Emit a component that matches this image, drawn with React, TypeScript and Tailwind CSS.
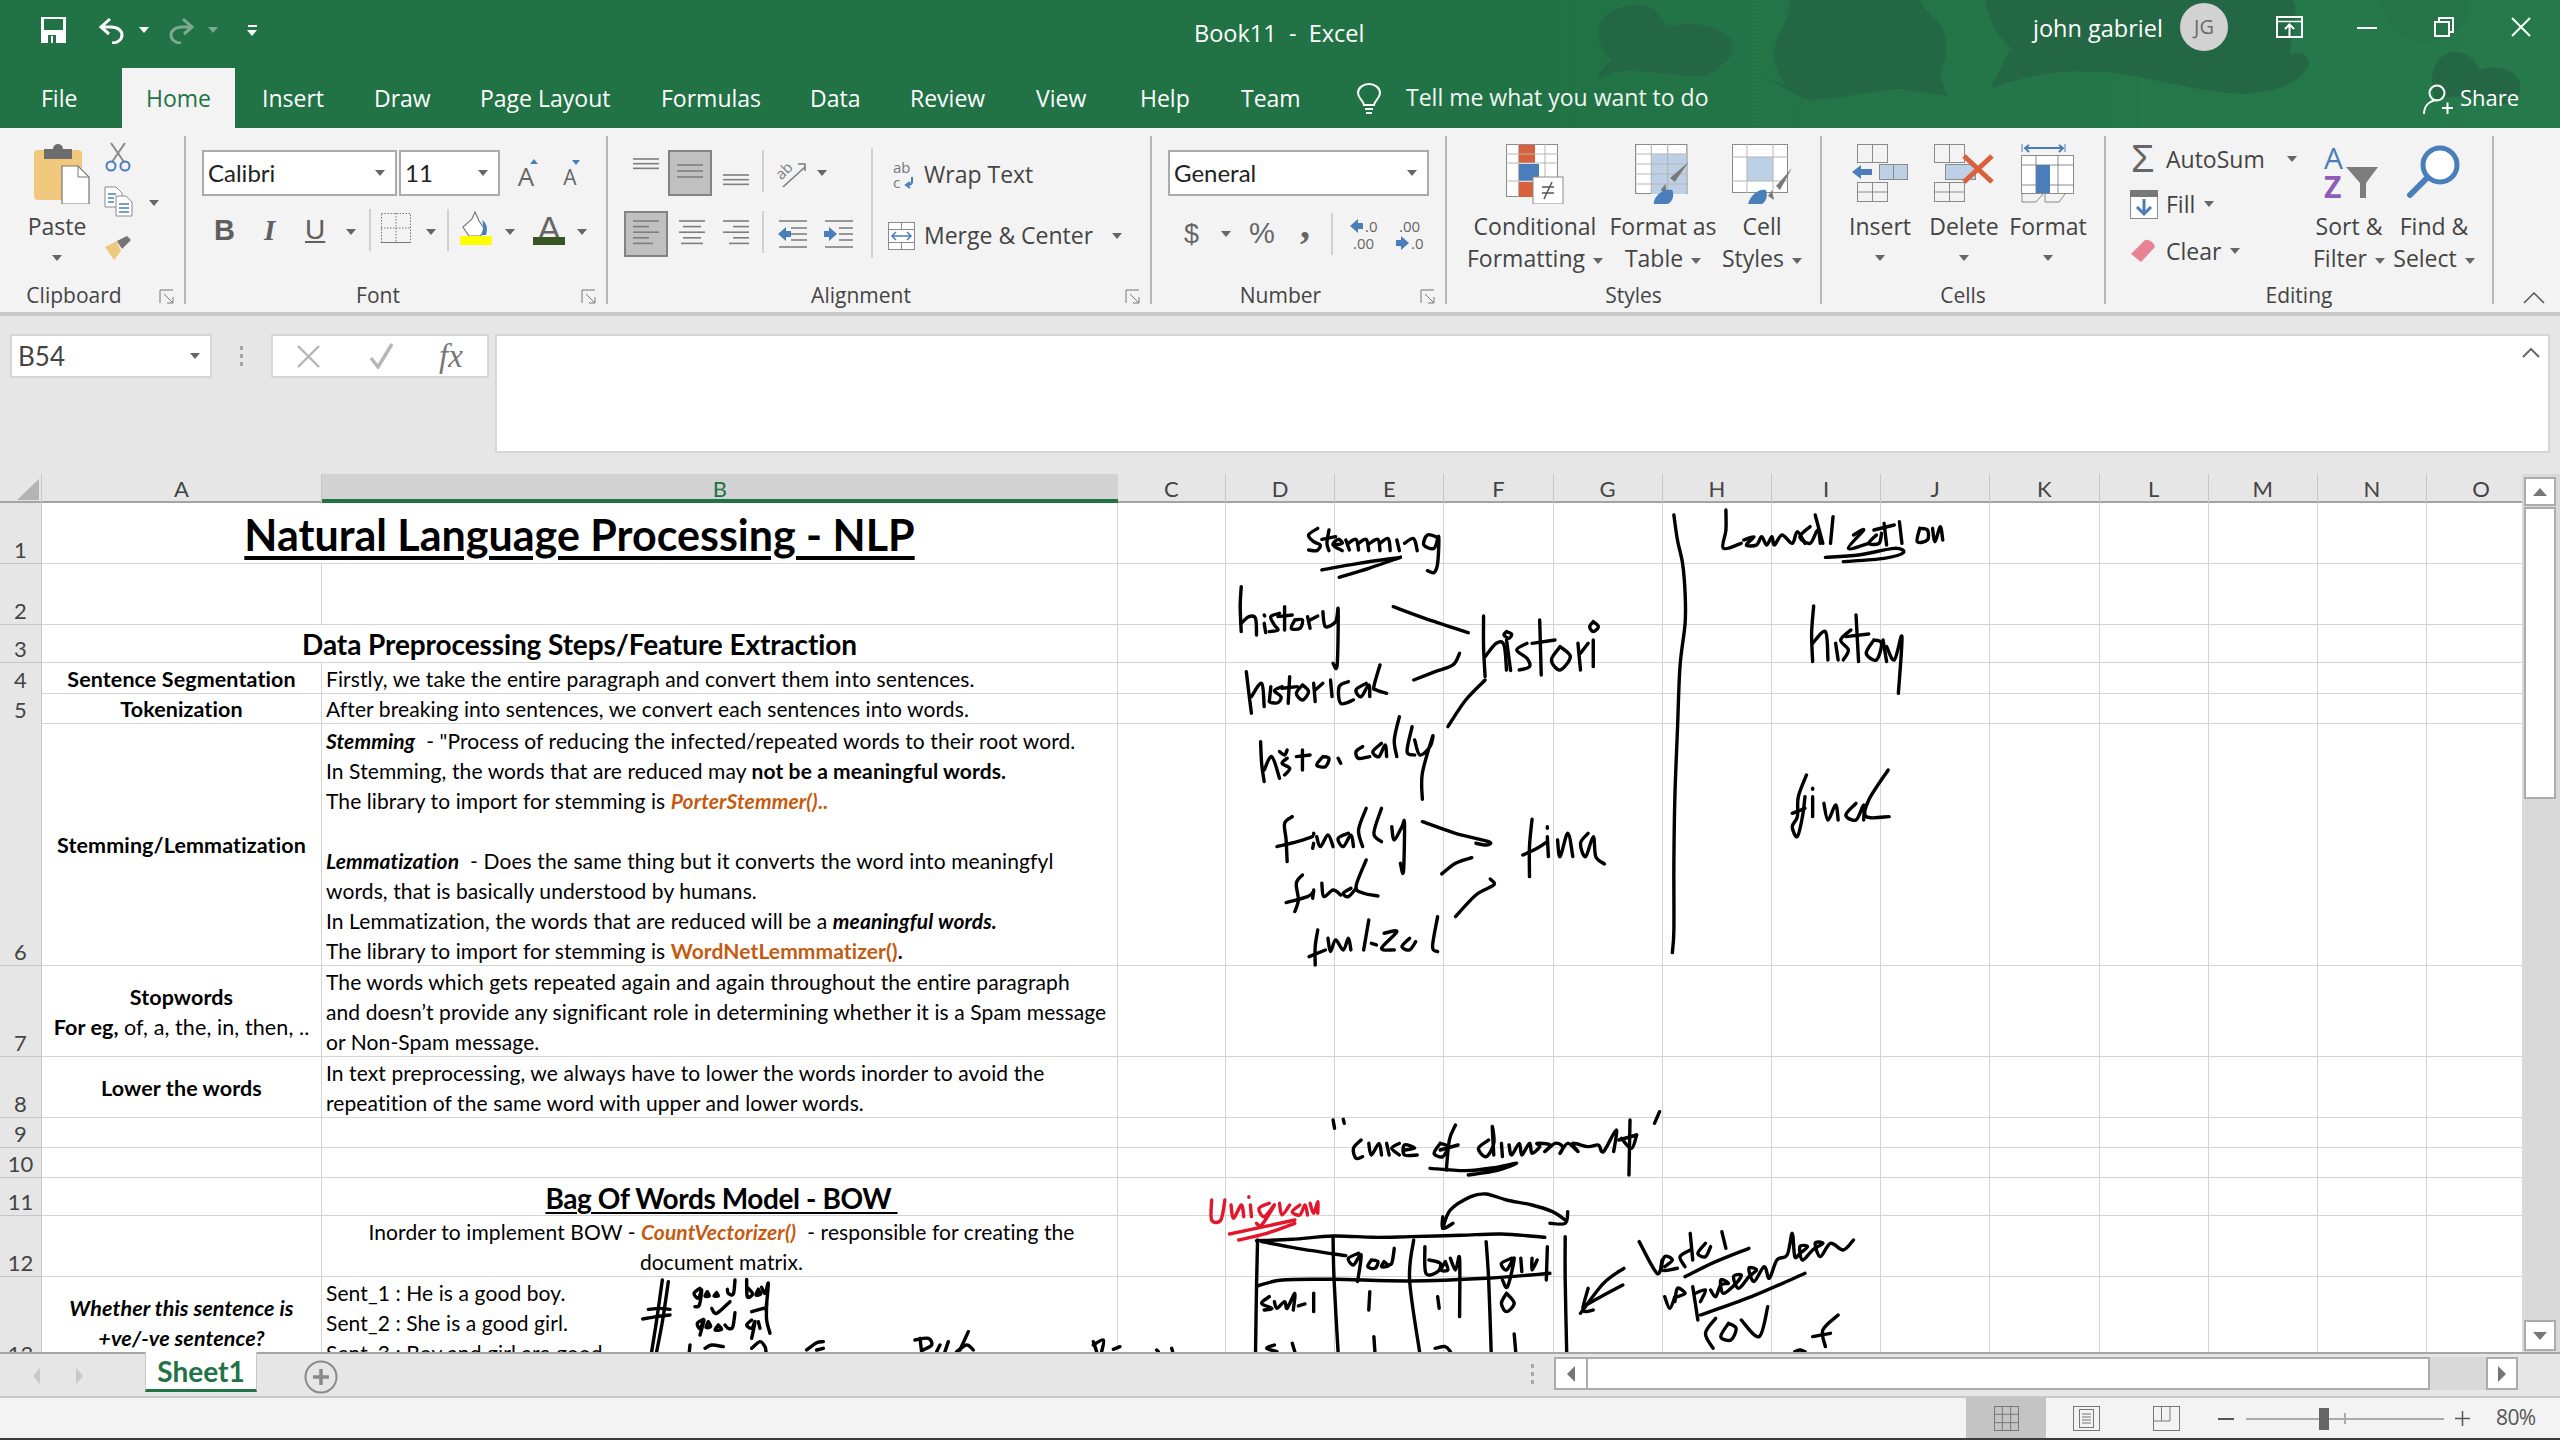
import React from "react";

const ink = (s: string) => {
  const n = s.trim().split(/\s+/).map(Number);
  const p: [number, number][] = [];
  for (let i = 0; i + 1 < n.length; i += 2) p.push([n[i], n[i + 1]]);
  if (p.length === 2) return `M${p[0][0]} ${p[0][1]}L${p[1][0]} ${p[1][1]}`;
  let d = `M${p[0][0]} ${p[0][1]}`;
  for (let i = 0; i < p.length - 1; i++) {
    const a = p[Math.max(0, i - 1)];
    const b = p[i];
    const c = p[i + 1];
    const e = p[Math.min(p.length - 1, i + 2)];
    const c1x = b[0] + (c[0] - a[0]) / 6;
    const c1y = b[1] + (c[1] - a[1]) / 6;
    const c2x = c[0] - (e[0] - b[0]) / 6;
    const c2y = c[1] - (e[1] - b[1]) / 6;
    d += `C${c1x} ${c1y} ${c2x} ${c2y} ${c[0]} ${c[1]}`;
  }
  return d;
};

const Strokes = ({ list, w = 3.4, color = "#000" }: { list: string[]; w?: number; color?: string }) => (
  <>
    {list.map((s, i) => (
      <path key={i} d={ink(s)} fill="none" stroke={color} strokeWidth={w} strokeLinecap="round" strokeLinejoin="round" vectorEffect="non-scaling-stroke" />
    ))}
  </>
);

const upper = [
  "270 145 252 165 262 185 275 195 268 212 252 210", "292 150 288 190 292 212", "278 178 305 170",
  "302 195 318 190 310 178 300 195 318 212", "325 180 332 210", "330 190 345 178 350 210", "350 190 365 178 370 212", "372 190 388 178 392 212", "392 190 408 176 412 212", "425 180 430 212", "440 190 458 176 465 212",
  "505 172 485 165 478 195 498 205 507 170 505 250 498 278 485 272", "278 270 350 250 432 232", "432 232 370 265 312 292",
  "120 320 118 380 120 455", "120 430 135 410 148 415 150 465", "165 430 168 458", "165 405 166 408", "195 400 178 410 185 435 192 450 175 455", "205 380 205 450", "192 410 220 405",
  "225 420 218 445 235 445 240 420 225 420", "250 410 255 445", "255 420 270 408", "280 395 285 440 305 425 310 390 308 555 300 550",
  "130 575 135 640 140 700", "140 650 160 610 165 680", "178 620 175 665", "200 620 185 632 198 650 192 668 178 668", "215 590 212 670", "200 625 230 620", "240 615 228 640 240 660 252 635 240 615", "262 610 265 665", "265 630 280 610", "295 600 298 650", "330 605 312 620 315 670 340 660", "365 610 345 630 355 650 370 615 372 650", "392 555 380 620 385 630 405 640",
  "418 380 480 415 565 458", "548 520 535 555 500 575 458 600", "598 600 560 660 525 740",
  "595 408 595 500 598 590", "598 530 620 490 635 495 640 570", "640 480 648 572", "640 455 635 465 645 475 650 462 640 455", "680 490 660 510 680 535 685 560 665 570", "705 420 708 585", "690 490 735 480", "745 500 728 540 745 570 765 530 745 500", "780 490 785 570", "785 520 800 490", "810 480 810 560", "810 425 803 440 810 455 820 440 810 425",
  "158 785 160 850 165 905", "165 870 180 830 195 895", "195 815 205 825 210 810", "210 835 200 850 215 865 205 885", "240 810 240 870", "228 830 255 825", "280 830 268 855 285 860 292 835 280 830", "310 835 315 850", "358 800 345 815 350 835 372 830", "395 790 378 815 390 830 402 795 405 830", "430 710 420 780 425 830", "455 740 445 815 460 825", "460 780 470 825 490 800 495 770 475 880 475 958",
  "220 1010 205 1030 208 1080 210 1145", "190 1100 230 1085 260 1070", "262 1060 262 1063", "262 1090 260 1105", "268 1070 275 1100 290 1065 300 1100", "330 1060 310 1075 320 1100 335 1065 340 1100", "365 985 350 1050 358 1100", "395 985 380 1060 395 1085", "415 1040 420 1080 435 1040 440 1030 438 1175 432 1150",
  "475 1025 540 1060 605 1085 600 1095 580 1090", "572 1133 540 1150 513 1182", "608 1197 615 1215 580 1245 540 1310",
  "690 1018 685 1100 685 1190", "672 1125 700 1105 720 1085", "720 1040 720 1045", "720 1070 722 1130", "740 1080 745 1130 760 1060 770 1130", "800 1060 785 1090 795 1130 810 1070 815 1130 832 1152",
  "240 1185 228 1210 232 1260 225 1295", "208 1268 250 1250 262 1235", "262 1230 260 1255", "278 1210 282 1250 300 1230 315 1245", "335 1225 320 1240 330 1250 345 1225", "365 1140 345 1220 360 1240 388 1248",
  "270 1350 265 1400 265 1455", "253 1430 285 1410", "290 1375 295 1415 305 1380 320 1410 330 1375 335 1410", "370 1320 360 1410", "375 1390 385 1395", "400 1360 425 1355 395 1405 420 1410", "450 1375 435 1400 450 1410 462 1385", "505 1310 495 1400 505 1415",
  "968 105 975 180 985 250 990 340 990 430 980 560 975 750 970 950 968 1150 968 1350 965 1418",
  "1070 90 1070 150 1065 205 1100 190", "1105 180 1125 170 1110 195 1130 195 1140 170 1150 195 1160 170 1165 195 1180 165 1200 190 1210 155 1225 190", "1235 140 1215 170 1235 190 1250 150 1255 190", "1245 105 1260 190", "1280 110 1275 190", "1320 165 1340 150 1310 205 1350 190", "1365 165 1350 190 1370 190 1375 160", "1380 130 1385 195", "1360 150 1400 135", "1410 125 1415 190", "1450 145 1445 185 1465 180 1465 150 1450 145", "1475 145 1480 185 1490 140 1495 180", "1265 232 1330 225 1400 205 1418 218 1380 235 1300 245",
  "1242 378 1238 460 1240 545", "1240 490 1265 455 1270 540", "1285 490 1290 540", "1315 450 1295 480 1310 510 1300 540", "1325 405 1330 545", "1305 470 1350 462", "1360 480 1345 520 1365 540 1375 490 1360 480", "1378 480 1385 545", "1385 500 1400 540 1415 470 1408 640",
  "1228 885 1212 950 1210 1010 1200 1040 1210 1070 1220 1010 1225 950", "1200 1000 1225 985", "1240 925 1240 928", "1240 950 1240 1010", "1262 970 1270 1020 1285 975 1290 1020", "1325 970 1305 1005 1325 1020 1340 975 1340 1020", "1388 870 1350 960 1345 1010 1390 1010",
];

const lower = [
  "300 120 303 145", "320 118 322 130", "355 180 340 205 345 235 358 230", "370 190 375 225 390 190 395 225", "405 190 410 225", "430 190 415 205 430 225", "440 210 460 205 440 195 440 225 465 225",
  "510 190 498 220 515 230 525 200 510 190", "540 135 528 180 522 270", "510 210 545 195", "605 180 585 205 600 230 615 190 612 140 615 225", "630 190 632 230",
  "645 195 650 225 665 190 670 225 685 190 690 220 705 200 700 190 725 195 715 215 735 190 750 200 745 220 760 190 780 215 770 190 800 200 820 195 830 215 855 150 850 215", "865 175 885 205 895 165", "882 120 880 285", "860 180 895 165",
  "490 265 560 272 620 262 660 250 620 272 565 285", "940 95 930 130",
  "150 482 220 478 300 468 380 472 450 470 550 466 630 462 715 472", "152 480 150 620 148 820", "160 485 230 505 325 527", "300 470 302 600 310 820", "458 480 450 600 470 820", "600 485 605 600 610 820", "720 500 718 600", "755 470 755 600 758 820", "152 618 200 600 300 598 450 603 600 595 725 580",
  "350 520 330 535 340 555 355 525 348 605", "375 540 368 560 382 565 388 545 375 540", "400 545 395 560 408 558 400 545", "420 505 415 550 405 555",
  "480 500 482 580 505 575 510 550 488 540", "520 545 512 570 525 570 520 545", "530 535 540 570 548 535 548 710",
  "650 535 630 550 640 570 655 535 642 620 632 600", "668 535 670 575", "690 535 690 570 700 540",
  "175 650 160 670 180 685 165 690", "185 665 190 685 205 665 210 685 225 640 222 690", "232 678 245 672", "262 640 262 695", "372 635 370 690", "505 650 508 685", "640 640 630 670 640 695 655 670 640 640",
  "515 445 530 390 570 350 600 342 640 360 690 375 730 395 755 420", "515 410 515 445 535 430", "725 430 755 430 760 395",
  "870 565 830 610 785 700", "868 615 825 650 790 680", "800 625 790 690 810 690",
  "900 485 935 580 945 540", "950 560 965 540 950 530 945 570 975 565", "1000 510 980 530 990 560", "1000 460 1005 540", "1030 490 1015 520 1030 530 1040 500", "1062 455 1070 505", "990 590 1050 545 1115 505",
  "950 650 960 685 970 650", "975 650 990 640 975 625 970 665", "1005 620 1015 720", "1010 640 1030 630 1020 665",
  "1040 630 1050 650 1060 615 1075 610 1060 600 1065 640 1090 610 1100 585 1085 590 1095 625 1115 590 1130 570 1115 565 1125 605 1145 560 1155 595 1170 540 1190 525 1200 460 1205 530 1215 520 1230 500 1215 500 1220 540 1240 510 1260 490 1245 490 1255 530 1275 490 1300 510 1320 480",
  "1020 705 1120 650 1225 580", "1050 715 1030 760 1045 805", "1075 730 1060 770 1080 780 1090 745 1075 730", "1100 720 1135 770 1152 680", "1290 705 1260 750 1265 800", "1240 770 1275 760", "1205 815 1215 810 1225 815",
  "185 795 170 805 190 815", "220 790 225 815", "380 770 382 815", "655 762 658 815", "500 805 520 800 530 815",
];

const red = ["62 360 62 420 80 420 88 360", "100 375 105 415 120 375 125 410", "135 350 135 352", "138 375 140 410", "175 370 155 385 165 410 185 375 160 435 150 430", "195 370 200 405 215 375", "235 375 220 395 235 405 245 375 250 405", "255 370 262 400 270 365 270 400", "97 462 165 440 225 420", "225 430 170 460 115 480"];

const mid = [
  "127 30 110 150 95 245", "145 35 128 150 110 245", "85 118 120 115 150 118", "68 147 110 140 150 135",
  "240 55 222 70 235 85 245 60 238 105 225 110", "262 65 255 78 268 78 262 65", "290 68 282 78 295 78 290 68", "345 30 340 72 325 70 322 58",
  "380 28 382 80 398 72 385 55", "415 58 408 75 422 72 415 58", "425 52 435 70 445 40 438 120", "275 115 290 130 330 95",
  "250 148 232 160 240 175 252 150 240 195", "265 155 258 172 272 170 265 155", "295 165 285 180 305 178 295 165", "345 128 338 172 325 175 315 165",
  "395 150 380 165 395 175 405 155 395 205", "415 155 420 175", "395 125 430 115", "440 100 440 150 450 190",
  "255 235 275 225 310 230", "210 225 208 245", "395 235 420 215 435 230 438 245", "560 240 590 218 610 215", "590 240 610 235",
  "900 205 905 245", "885 210 925 205 935 225 910 240", "960 225 950 245", "985 215 975 245", "1045 185 1020 240", "1010 245 1040 225 1060 240",
];
const midRight = ["280 225 310 210 305 245", "280 215 290 245", "340 238 360 230", "470 240 475 245", "515 235 518 245"];

const Caret = ({ className = "" }: { className?: string }) => (
  <span className={`inline-block w-0 h-0 border-x-[5px] border-x-transparent border-t-[6px] border-t-[#666666] align-middle ${className}`} />
);

const Launcher = () => (
  <svg width="15" height="15" viewBox="0 0 15 15" fill="none" stroke="#777" strokeWidth="1">
    <path d="M14 1H1V14" />
    <path d="M5 5L13.5 13.5M8 14H14V8" />
  </svg>
);

const Group = ({ label, launcher, className, children }: { label: string; launcher?: boolean; className: string; children: React.ReactNode }) => (
  <div className={`flex flex-col h-[168px] border-r-2 border-[#b6b6b6] shrink-0 ${className}`}>
    <div className="flex-1 flex min-h-0">{children}</div>
    <div className="flex items-center h-[26px] pt-[8px] text-[21px] text-[#444] leading-[24px]">
      <span className="flex-1 text-center">{label}</span>
      {launcher && <span className="w-[36px] flex justify-center pt-[2px]"><Launcher /></span>}
    </div>
  </div>
);

const Big = ({ icon, lines, className, below }: { icon: React.ReactNode; lines: React.ReactNode[]; className: string; below?: boolean }) => (
  <div className={`flex flex-col items-center pt-[8px] ${className}`}>
    <div className="h-[66px] flex items-start justify-center">{icon}</div>
    {lines.map((l, i) => (
      <div key={i} className="h-[32px] leading-[32px] whitespace-nowrap text-[23px] text-[#444]">{l}</div>
    ))}
    {below && <div className="h-[32px] flex items-center justify-center"><Caret /></div>}
  </div>
);

const AlignIcon = ({ w, ys, rows }: { w: number; ys: number; rows: [number, number][] }) => (
  <svg width={w} height={ys} viewBox={`0 0 ${w} ${ys}`} stroke="#7d7d7d" strokeWidth="1.6">
    {rows.map((r, i) => <line key={i} x1={r[0]} x2={r[1]} y1={i * (ys / rows.length) + 1} y2={i * (ys / rows.length) + 1} />)}
  </svg>
);
const R3: [number, number][] = [[0, 26], [0, 26], [0, 26]];
const R5L: [number, number][] = [[0, 26], [0, 16], [0, 26], [0, 16], [0, 20]];
const R5C: [number, number][] = [[0, 26], [4, 22], [0, 26], [4, 22], [2, 24]];
const R5R: [number, number][] = [[0, 26], [10, 26], [0, 26], [10, 26], [6, 26]];

const Selected = ({ children }: { children: React.ReactNode }) => (
  <div className="w-[44px] h-[46px] bg-[#c0c0c0] border-2 border-[#838383] flex items-center justify-center">{children}</div>
);
const Plain = ({ children, className = "" }: { children: React.ReactNode; className?: string }) => (
  <div className={`w-[44px] h-[46px] flex justify-center ${className}`}>{children}</div>
);

const GridIcon = ({ w, h, cols, rows, stroke = "#8a8a8a", className = "" }: { w: number; h: number; cols: number; rows: number; stroke?: string; className?: string }) => (
  <svg width={w} height={h} viewBox={`0 0 ${w} ${h}`} fill="none" stroke={stroke} strokeWidth="1" className={className}>
    <rect x="0.5" y="0.5" width={w - 1} height={h - 1} />
    {Array.from({ length: cols - 1 }, (_, i) => <line key={i} x1={((i + 1) * w) / cols} x2={((i + 1) * w) / cols} y1="0" y2={h} />)}
    {Array.from({ length: rows - 1 }, (_, i) => <line key={i} y1={((i + 1) * h) / rows} y2={((i + 1) * h) / rows} x1="0" x2={w} />)}
  </svg>
);

const COLS = "grid-cols-[42px_280px_796px_108px_repeat(12,109.2px)]";
const rest = ["C", "D", "E", "F", "G", "H", "I", "J", "K", "L", "M", "N", "O"];
const cellBase = "border-r border-b border-[#d4d4d4] min-w-0";
const orange = "text-[#c55a11]";

type Row = { n: number; h: string; a?: React.ReactNode; b?: React.ReactNode; merged?: React.ReactNode; bCls?: string };
const rows: Row[] = [
  { n: 1, h: "h-[61px]", merged: <span className="text-[43px] font-bold underline decoration-[4px] underline-offset-[5px] tracking-normal text-black translate-y-[1px]">Natural Language Processing - NLP</span> },
  { n: 2, h: "h-[61px]" },
  { n: 3, h: "h-[38px]", merged: <span className="text-[28px] font-bold tracking-[-0.1px] text-black">Data Preprocessing Steps/Feature Extraction</span> },
  { n: 4, h: "h-[30px]", a: "Sentence Segmentation", b: "Firstly, we take the entire paragraph and convert them into sentences." },
  { n: 5, h: "h-[30px]", a: "Tokenization", b: "After breaking into sentences, we convert each sentences into words." },
  {
    n: 6, h: "h-[243px]", a: "Stemming/Lemmatization",
    b: (
      <>
        <div><b><i>Stemming</i></b>&nbsp; - "Process of reducing the infected/repeated words to their root word.</div>
        <div>In Stemming, the words that are reduced may <b>not be a meaningful words.</b></div>
        <div>The library to import for stemming is <b className={orange}><i>PorterStemmer()</i>..</b></div>
        <div>&nbsp;</div>
        <div><b><i>Lemmatization</i></b>&nbsp; - Does the same thing but it converts the word into meaningfyl</div>
        <div>words, that is basically understood by humans.</div>
        <div>In Lemmatization, the words that are reduced will be a <b><i>meaningful words.</i></b></div>
        <div>The library to import for stemming is <b className={orange}>WordNetLemmmatizer()</b><b>.</b></div>
      </>
    ),
  },
  {
    n: 7, h: "h-[91px]",
    a: <><div>Stopwords</div><div>For eg, <span className="font-normal">of, a, the, in, then, ..</span></div></>,
    b: (
      <>
        <div>The words which gets repeated again and again throughout the entire paragraph</div>
        <div>and doesn’t provide any significant role in determining whether it is a Spam message</div>
        <div>or Non-Spam message.</div>
      </>
    ),
  },
  {
    n: 8, h: "h-[61px]", a: "Lower the words",
    b: (
      <>
        <div>In text preprocessing, we always have to lower the words inorder to avoid the</div>
        <div>repeatition of the same word with upper and lower words.</div>
      </>
    ),
  },
  { n: 9, h: "h-[30px]" },
  { n: 10, h: "h-[30px]" },
  { n: 11, h: "h-[38px]", bCls: "text-center", b: <span className="text-[28px] font-bold underline decoration-[2px] underline-offset-[3px] tracking-[-0.4px] whitespace-pre text-black">Bag Of Words Model - BOW </span> },
  {
    n: 12, h: "h-[61px]", bCls: "text-center",
    b: (
      <>
        <div>Inorder to implement BOW - <b className={orange}><i>CountVectorizer()</i></b>&nbsp; - responsible for creating the</div>
        <div>document matrix.</div>
      </>
    ),
  },
  {
    n: 13, h: "h-[91px]",
    a: <div className="italic"><div>Whether this sentence is</div><div>+ve/-ve sentence?</div></div>,
    bCls: "justify-start",
    b: (
      <>
        <div>Sent_1 : He is a good boy.</div>
        <div>Sent_2 : She is a good girl.</div>
        <div>Sent_3 : Boy and girl are good.</div>
      </>
    ),
  },
];

const Sheet = () => (
  <div className="relative w-[2522px] h-[878px] overflow-hidden bg-white font-['Lato',sans-serif] text-[21px] leading-[30px] tracking-[0.1px] text-black">
    <div className={`grid ${COLS} h-[29px] text-[22px] leading-[29px] text-[#444] text-center bg-[#e6e6e6] border-b-2 border-[#a3a3a3]`}>
      <div className="border-r border-[#c6c6c6] flex items-end justify-end pb-[3px] pr-[2px]">
        <svg width="22" height="21"><path d="M22 0V21H0Z" fill="#b4b4b4" /></svg>
      </div>
      <div className="border-r border-[#c6c6c6]">A</div>
      <div className="bg-[#d2d2d2] text-[#217346] border-b-4 border-[#217346] h-[29px]">B</div>
      {rest.map((c) => <div key={c} className="border-r border-[#c6c6c6]">{c}</div>)}
    </div>
    {rows.map((r) => (
      <div key={r.n} className={`grid ${COLS} ${r.h}`}>
        <div className="bg-[#e6e6e6] border-r border-b border-[#c6c6c6] text-[22px] text-[#444] leading-[26px] flex items-end justify-center tracking-normal">{r.n}</div>
        {r.merged ? (
          <div className={`col-span-2 ${cellBase} flex items-center justify-center leading-none`}>{r.merged}</div>
        ) : (
          <>
            <div className={`${cellBase} flex flex-col justify-center items-center text-center font-bold whitespace-nowrap text-[21.5px] tracking-[0.1px]`}><div className="translate-y-[1px]">{r.a}</div></div>
            <div className={`${cellBase} flex flex-col ${r.bCls === "justify-start" ? "justify-start" : "justify-end"} ${r.bCls === "text-center" ? "text-center" : ""} pl-[4px] whitespace-nowrap overflow-hidden`}><div className="translate-y-[1px]">{r.b}</div></div>
          </>
        )}
        {rest.map((c) => <div key={c} className={cellBase} />)}
      </div>
    ))}
    <svg className="absolute left-0 top-0" width="2522" height="878" viewBox="0 474 2522 878">
      <g transform="translate(1180 480) scale(0.5102 0.3333)"><Strokes list={upper} /></g>
      <g transform="translate(1180 1080) scale(0.5102 0.3333)"><Strokes list={lower} /><Strokes list={red} color="#e2162c" /></g>
      <g transform="translate(620 1270) scale(0.3333)"><Strokes list={mid} /></g>
      <g transform="translate(1000 1270) scale(0.3333)"><Strokes list={midRight} /></g>
    </svg>
  </div>
);

export default function App() {
  const tabs: [string, string][] = [
    ["Insert", "w-[112px]"], ["Draw", "w-[106px]"], ["Page Layout", "w-[181px]"], ["Formulas", "w-[149px]"], ["Data", "w-[100px]"],
    ["Review", "w-[126px]"], ["View", "w-[104px]"], ["Help", "w-[101px]"], ["Team", "w-[116px]"],
  ];
  return (
    <div className="w-[2560px] h-[1440px] flex flex-col overflow-hidden bg-[#e6e6e6] font-['Open_Sans',sans-serif]">
      {/* Title + tabs */}
      <div className="relative h-[128px] bg-[#217346] text-white shrink-0">
        <svg className="absolute left-0 top-0" width="2560" height="128" fill="#246744">
          <defs>
            <linearGradient id="sheen" x1="0" x2="1" y1="0" y2="0">
              <stop offset="0" stopColor="#217346" />
              <stop offset="1" stopColor="#26794a" />
            </linearGradient>
          </defs>
          <rect x="1500" y="0" width="1060" height="128" fill="url(#sheen)" />
          <path d="M1598 80C1600 70 1606 64 1612 60C1600 50 1596 35 1600 25C1608 5 1640 0 1655 10C1662 20 1665 28 1675 25C1700 20 1730 30 1733 45C1735 60 1715 70 1705 76C1680 78 1640 68 1615 72Z" />
          <path d="M1767 79C1780 85 1790 92 1805 99C1830 102 1870 90 1900 89L1947 96C1945 85 1935 78 1945 60C1950 35 1940 20 1925 10L1920 0L1790 0C1790 20 1780 30 1775 45C1770 60 1780 75 1785 85Z" />
          <path d="M1990 88C2000 75 2005 55 2011 48C1995 35 1988 15 1985 0L2293 0C2300 15 2290 40 2290 55C2300 50 2310 55 2309 65C2300 85 2270 93 2240 94C2190 92 2130 70 2090 72C2050 68 2010 82 1990 88Z" />
          <path d="M2435 100C2430 80 2430 60 2450 52C2465 50 2475 60 2480 70C2500 62 2525 75 2520 90C2515 105 2500 108 2490 100C2470 95 2450 95 2435 100Z" />
          <path d="M2380 0C2385 25 2400 50 2440 40C2465 30 2473 15 2470 0Z" opacity="0.25" />
        </svg>
        <div className="relative flex items-center h-[68px] pb-[8px]">
          <svg className="ml-[41px]" width="25" height="26" viewBox="0 0 25 26">
            <path d="M0 0H25V26H0Z" fill="#fff" />
            <path d="M3 2H22V13H3Z" fill="#217346" />
            <path d="M7 18H15V26H7Z" fill="#217346" />
            <path d="M10 19H12V26H10Z" fill="#fff" />
          </svg>
          <svg className="ml-[32px]" width="26" height="27" viewBox="0 0 26 27" fill="none" stroke="#fff" strokeWidth="3">
            <path d="M12 2L3 10L11 17" />
            <path d="M3 10H13C20 10 24 14 24 18C24 23 19 26 14 26" />
          </svg>
          <Caret className="ml-[15px] !border-t-white" />
          <svg className="ml-[20px] opacity-40" width="26" height="27" viewBox="0 0 26 27" fill="none" stroke="#fff" strokeWidth="3">
            <path d="M14 2L23 10L15 17" />
            <path d="M23 10H13C6 10 2 14 2 18C2 23 7 26 12 26" />
          </svg>
          <Caret className="ml-[13px] opacity-40 !border-t-white" />
          <span className="ml-[29px] flex flex-col items-center gap-[3px]">
            <span className="w-[9px] h-[2px] bg-white" />
            <Caret className="!border-t-white" />
          </span>
          <div className="absolute left-[1194px] top-[17px] text-[23.5px] leading-[32px] whitespace-pre">Book11  -  Excel</div>
          <div className="absolute left-[2033px] top-[12px] text-[23.5px] leading-[32px]">john gabriel</div>
          <div className="absolute left-[2180px] top-[3px] w-[48px] h-[48px] rounded-full bg-[#d2d2d2] flex items-center justify-center text-[20px] text-[#6b6b6b]">JG</div>
          <svg className="absolute left-[2276px] top-[16px]" width="27" height="22" fill="none" stroke="#fff" strokeWidth="2">
            <rect x="1" y="1" width="25" height="20" />
            <path d="M1 5.5H26" strokeWidth="1.5" />
            <path d="M13.5 20V9M9 13L13.5 8.5L18 13" />
          </svg>
          <div className="absolute left-[2357px] top-[27px] w-[20px] h-[2px] bg-white" />
          <svg className="absolute left-[2434px] top-[17px]" width="20" height="20" fill="none" stroke="#fff" strokeWidth="2">
            <rect x="1" y="5" width="14" height="14" />
            <path d="M5 5V1H19V15H15" />
          </svg>
          <svg className="absolute left-[2511px] top-[17px]" width="20" height="20" stroke="#fff" strokeWidth="2">
            <path d="M1 1L19 19M19 1L1 19" />
          </svg>
        </div>
        <div className="relative flex items-stretch h-[60px] text-[23px]">
          <div className="w-[122px] pl-[41px] pt-[13px]">File</div>
          <div className="w-[113px] pl-[24px] pt-[13px] bg-[#f3f3f3] text-[#217346]">Home</div>
          {tabs.map(([t, c]) => <div key={t} className={`${c} pl-[27px] pt-[13px] whitespace-nowrap`}>{t}</div>)}
          <svg className="ml-[26px] mt-[15px]" width="26" height="31" viewBox="0 0 26 31" fill="none" stroke="#fff" strokeWidth="2">
            <path d="M8 22C7 17 2 15 2 10C2 5 7 1 13 1C19 1 24 5 24 10C24 15 19 17 18 22Z" />
            <path d="M9 26H17M10 30H16" />
          </svg>
          <div className="ml-[24px] pt-[12px] whitespace-nowrap text-[#f1f6f3]">Tell me what you want to do</div>
          <svg className="absolute left-[2423px] top-[16px]" width="30" height="31" fill="none" stroke="#fff" strokeWidth="2">
            <circle cx="14" cy="9" r="7.5" />
            <path d="M1 30C1 22 6 17 14 16" />
            <path d="M19 24H30M24.5 18.5V30" />
          </svg>
          <div className="absolute left-[2460px] top-[13px] text-[22px]">Share</div>
        </div>
      </div>

      {/* Ribbon */}
      <div className="flex h-[188px] shrink-0 bg-[#f3f3f3] border-b-4 border-[#c8c8c8] pt-[8px] text-[#444]">
        <Group label="Clipboard" launcher className="w-[186px]">
          <div className="w-[104px] flex flex-col items-center pl-[20px] pt-[8px]">
            <svg width="56" height="60" viewBox="0 0 56 60">
              <rect x="0" y="6" width="48" height="50" rx="4" fill="#f0c97f" />
              <rect x="10" y="5" width="28" height="10" fill="#6d6d6d" />
              <circle cx="24" cy="5" r="5" fill="#6d6d6d" />
              <path d="M28 22H44L55 33V60H28Z" fill="#fff" stroke="#777" strokeWidth="1.2" />
              <path d="M44 22V33H55" fill="none" stroke="#777" strokeWidth="1" />
            </svg>
            <div className="mt-[6px] h-[32px] leading-[32px] text-[23px] pr-[10px]">Paste</div>
            <div className="h-[32px] flex items-center pr-[10px]"><Caret /></div>
          </div>
          <div className="flex flex-col pt-[6px] items-start">
            <svg width="28" height="30" viewBox="0 0 28 30" fill="none" strokeWidth="2">
              <path d="M7 1L20 20M21 1L8 20" stroke="#8a8a8a" />
              <circle cx="7" cy="24" r="4.5" stroke="#4a7ebb" />
              <circle cx="21" cy="24" r="4.5" stroke="#4a7ebb" />
            </svg>
            <div className="flex items-center mt-[14px]">
              <svg width="30" height="31" viewBox="0 0 30 31" fill="#fff" stroke="#8a8a8a" strokeWidth="1">
                <path d="M1 1H12L18 7V21H1Z" />
                <path d="M12 10H22L28 16V30H12Z" />
                <path d="M4 8H12M4 12H10M4 16H10M15 18H25M15 22H25M15 26H25" stroke="#4a7ebb" strokeWidth="1.6" />
              </svg>
              <Caret className="ml-[15px] mt-[2px]" />
            </div>
            <svg className="mt-[19px]" width="28" height="24" viewBox="0 0 28 24">
              <path d="M1 11L13 5L17 15L10 24Z" fill="#efc87f" />
              <path d="M13 5L23 0L27 4L18 13Z" fill="#757575" />
            </svg>
          </div>
        </Group>

        <Group label="Font" launcher className="w-[422px]">
          <div className="pl-[16px] pt-[14px] flex flex-col gap-[15px]">
            <div className="flex items-center h-[46px] gap-[2px]">
              <div className="w-[195px] h-[46px] bg-white border-2 border-[#ababab] flex items-center justify-between pl-[4px] pr-[10px] text-[24px] text-[#222] font-['Lato']">Calibri<Caret /></div>
              <div className="w-[101px] h-[46px] bg-white border-2 border-[#ababab] flex items-center justify-between pl-[4px] pr-[10px] text-[24px] text-[#222] font-['Lato']">11<Caret /></div>
              <span className="relative ml-[12px] w-[24px] text-[26px] leading-none text-[#666] mt-[6px] text-center">A
                <span className="absolute left-[16px] -top-[4px] w-0 h-0 border-x-[4px] border-x-transparent border-b-[5px] border-b-[#4a7ebb]" />
              </span>
              <span className="relative ml-[20px] w-[20px] text-[21px] leading-none text-[#666] mt-[8px] text-center">A
                <span className="absolute left-[12px] -top-[7px] w-0 h-0 border-x-[4px] border-x-transparent border-t-[5px] border-t-[#4a7ebb]" />
              </span>
            </div>
            <div className="flex items-start h-[46px] text-[#5f5f5f]">
              <span className="ml-[12px] w-[50px] text-[29px] leading-[38px] font-bold font-['Liberation_Sans']">B</span>
              <span className="w-[41px] text-[29px] leading-[38px] italic font-bold font-['Liberation_Serif']">I</span>
              <span className="w-[28px] text-[28px] leading-[38px] underline underline-offset-[2px] font-['Liberation_Sans']">U</span>
              <Caret className="mt-[18px] ml-[13px]" />
              <div className="ml-[13px] w-[2px] h-[42px] bg-[#d0d0d0] mt-[-2px]" />
              <svg className="ml-[10px] mt-[2px]" width="30" height="30" fill="none" stroke="#777">
                <path d="M.5 .5H29.5V29.5H.5Z" strokeDasharray="1.5 1.5" />
                <path d="M15 0V30M0 15H30" strokeDasharray="1.5 1.5" />
                <path d="M0 29.5H30" strokeWidth="1" />
              </svg>
              <Caret className="mt-[18px] ml-[15px]" />
              <div className="ml-[11px] w-[2px] h-[42px] bg-[#d0d0d0] mt-[-2px]" />
              <svg className="ml-[11px] mt-[0px]" width="32" height="34" viewBox="0 0 32 34">
                <path d="M15 1L19 10L26 20L20 25H9L3 16L12 8Z" fill="#fff" stroke="#777" strokeWidth="1.2" />
                <path d="M22 9C27 12 28 18 26 24L21 24C23 20 24 14 22 9Z" fill="#4a7ebb" />
                <rect x="0" y="25" width="32" height="9" fill="#ffff00" />
              </svg>
              <Caret className="mt-[18px] ml-[13px]" />
              <span className="relative ml-[18px] w-[32px] text-center text-[34px] leading-[34px] font-['Liberation_Sans'] text-[#666]">A
                <span className="absolute left-0 top-[26px] w-[32px] h-[8px] bg-[#375623]" />
              </span>
              <Caret className="mt-[18px] ml-[12px]" />
            </div>
          </div>
        </Group>

        <Group label="Alignment" launcher className="w-[544px]">
          <div className="w-[263px] pl-[16px] pt-[14px] flex flex-col gap-[15px]">
            <div className="flex h-[46px]">
              <Plain className="pt-[8px]"><AlignIcon w={26} ys={14} rows={R3} /></Plain>
              <Selected><AlignIcon w={26} ys={18} rows={R3} /></Selected>
              <Plain className="pt-[24px] ml-[2px]"><AlignIcon w={26} ys={14} rows={R3} /></Plain>
              <div className="ml-[4px] w-[2px] h-[42px] bg-[#d0d0d0]" />
              <svg className="ml-[13px] mt-[8px]" width="30" height="30" viewBox="0 0 30 30" fill="none" stroke="#7a7a7a" strokeWidth="1.5">
                <path d="M6 29L28 9M21 6H28V13" />
                <text x="-2" y="17" transform="rotate(-45 8 12)" fontSize="15" fill="#7a7a7a" stroke="none" fontFamily="Open Sans">ab</text>
              </svg>
              <Caret className="mt-[20px] ml-[10px]" />
            </div>
            <div className="flex h-[46px]">
              <Selected><AlignIcon w={26} ys={28} rows={R5L} /></Selected>
              <Plain className="pt-[9px] ml-[2px]"><AlignIcon w={26} ys={28} rows={R5C} /></Plain>
              <Plain className="pt-[9px]"><AlignIcon w={26} ys={28} rows={R5R} /></Plain>
              <div className="ml-[4px] w-[2px] h-[42px] bg-[#d0d0d0]" />
              <svg className="ml-[13px] mt-[9px]" width="30" height="28" viewBox="0 0 30 28" stroke="#7a7a7a" strokeWidth="1.6">
                <path d="M2 1H30M14 8H30M14 14H30M14 20H30M2 27H30" />
                <path d="M1 14L9 7V11H14V17H9V21Z" fill="#4a7ebb" stroke="none" />
              </svg>
              <svg className="ml-[16px] mt-[9px]" width="30" height="28" viewBox="0 0 30 28" stroke="#7a7a7a" strokeWidth="1.6">
                <path d="M2 1H30M16 8H30M16 14H30M16 20H30M2 27H30" />
                <path d="M14 14L6 7V11H1V17H6V21Z" fill="#4a7ebb" stroke="none" />
              </svg>
            </div>
          </div>
          <div className="my-[12px] w-[2px] h-[110px] bg-[#d0d0d0]" />
          <div className="pl-[18px] pt-[14px] flex flex-col gap-[13px] text-[23px]">
            <div className="flex items-center h-[50px]">
              <svg width="24" height="30" viewBox="0 0 24 30">
                <text x="2" y="13" fontSize="15" fill="#777" fontFamily="Open Sans">ab</text>
                <text x="2" y="28" fontSize="15" fill="#777" fontFamily="Open Sans">c</text>
                <path d="M21 17V22C21 24 19 25 16 25M19 22L15 25L19 28" fill="none" stroke="#4a7ebb" strokeWidth="2" />
              </svg>
              <span className="ml-[9px] -mt-[2px]">Wrap Text</span>
            </div>
            <div className="flex items-center h-[46px]">
              <svg className="-ml-[3px]" width="27" height="28" viewBox="0 0 27 28" fill="#fff" stroke="#8a8a8a">
                <rect x=".5" y=".5" width="26" height="27" />
                <path d="M.5 7.5H26.5M.5 20.5H26.5M13.5 .5V7.5M13.5 20.5V27.5" />
                <path d="M4 14H23M8 10L4 14L8 18M19 10L23 14L19 18" fill="none" stroke="#4a7ebb" strokeWidth="1.5" />
              </svg>
              <span className="ml-[9px] whitespace-nowrap -mt-[2px]">Merge &amp; Center</span>
              <Caret className="ml-[19px]" />
            </div>
          </div>
        </Group>

        <Group label="Number" launcher className="w-[295px]">
          <div className="pl-[16px] pt-[14px] flex flex-col gap-[15px]">
            <div className="w-[261px] h-[46px] bg-white border-2 border-[#ababab] flex items-center justify-between pl-[4px] pr-[10px] text-[24px] text-[#222] font-['Lato']">General<Caret /></div>
            <div className="flex items-center h-[46px] text-[#666]">
              <span className="ml-[16px] w-[16px] text-[27px] font-['Liberation_Sans']">$</span>
              <Caret className="ml-[21px]" />
              <span className="ml-[18px] w-[30px] text-[29px] font-['Liberation_Sans']">%</span>
              <span className="ml-[21px] w-[14px] text-[40px] leading-[30px] -mt-[18px] font-bold font-['Liberation_Serif']">,</span>
              <div className="ml-[17px] w-[2px] h-[42px] bg-[#d0d0d0]" />
              <svg className="ml-[16px]" width="30" height="32" viewBox="0 0 30 32">
                <path d="M1 8L9 1V5H14V11H9V15Z" fill="#4a7ebb" />
                <text x="16" y="14" fontSize="15" fill="#666" fontFamily="Open Sans">.0</text>
                <text x="4" y="31" fontSize="15" fill="#666" fontFamily="Open Sans">.00</text>
              </svg>
              <svg className="ml-[16px]" width="30" height="32" viewBox="0 0 30 32">
                <text x="4" y="14" fontSize="15" fill="#666" fontFamily="Open Sans">.00</text>
                <path d="M14 25L6 18V22H1V28H6V32Z" fill="#4a7ebb" />
                <text x="16" y="31" fontSize="15" fill="#666" fontFamily="Open Sans">.0</text>
              </svg>
            </div>
          </div>
        </Group>

        <Group label="Styles" className="w-[375px]">
          <Big className="w-[150px] ml-[13px]" lines={["Conditional", <>Formatting<Caret className="ml-[8px]" /></>]} icon={
            <svg width="58" height="60" viewBox="0 0 58 60">
              <rect x=".5" y=".5" width="51" height="52" fill="#fff" stroke="#8a8a8a" />
              <rect x="13" y="1" width="16" height="18" fill="#d9603d" />
              <rect x="13" y="20" width="20" height="17" fill="#4a7ebb" />
              <rect x="13" y="38" width="20" height="15" fill="#d9603d" />
              <path d="M0 10H52M0 19H52M0 37H52M12.5 0V53M39 0V53" stroke="#b5b5b5" fill="none" />
              <rect x="27" y="33" width="30" height="27" fill="#fff" stroke="#8a8a8a" />
              <path d="M36 43H48M36 49H48M46 38L38 55" stroke="#555" strokeWidth="1.5" />
            </svg>
          } />
          <Big className="w-[106px]" lines={["Format as", <>Table<Caret className="ml-[8px]" /></>]} icon={
            <svg width="56" height="60" viewBox="0 0 48 60" preserveAspectRatio="none">
              <rect x=".5" y=".5" width="44" height="49" fill="#fff" stroke="#8a8a8a" />
              <rect x="14" y="10" width="30" height="40" fill="#bdd0e6" />
              <path d="M0 10H45M0 20H45M0 30H45M0 40H45M14 0V50M28 0V50" stroke="#b5b5b5" fill="none" />
              <path d="M46 18L34 38L30 34Z" fill="#7a7a7a" />
              <path d="M26 40L22 46L28 52Z" fill="#7a7a7a" />
              <path d="M16 60C16 52 24 44 32 46C34 52 32 58 28 60Z" fill="#4a7ebb" />
            </svg>
          } />
          <Big className="w-[92px]" lines={["Cell", <>Styles<Caret className="ml-[8px]" /></>]} icon={
            <svg width="60" height="60" viewBox="0 0 60 60">
              <rect x=".5" y=".5" width="55" height="48" fill="#fff" stroke="#8a8a8a" />
              <rect x="15" y="13" width="26" height="24" fill="#bdd0e6" />
              <path d="M15 0V49M41 0V49M0 13H56M0 37H56" stroke="#b5b5b5" fill="none" />
              <path d="M60 24L48 46L44 42Z" fill="#7a7a7a" />
              <path d="M40 46L36 52L42 56Z" fill="#7a7a7a" />
              <path d="M16 60C18 52 26 44 34 46C36 52 34 58 30 60Z" fill="#4a7ebb" />
            </svg>
          } />
        </Group>

        <Group label="Cells" className="w-[284px]">
          <Big below className="w-[84px] ml-[16px]" lines={["Insert"]} icon={
            <svg width="56" height="58" viewBox="0 0 56 58" fill="#fff" stroke="#8a8a8a">
              <rect x="5.5" y=".5" width="30" height="18" fill="#f3f3f3" />
              <path d="M20.5 0V18" />
              <rect x="5.5" y="38.5" width="30" height="19" fill="#f3f3f3" />
              <path d="M20.5 38V58M5 48H36" />
              <rect x="27.5" y="20.5" width="28" height="15" fill="#bdd0e6" />
              <path d="M41.5 20V36" />
              <path d="M0 28L9 21V25H20V31H9V35Z" fill="#4a7ebb" stroke="none" />
            </svg>
          } />
          <Big below className="w-[84px]" lines={["Delete"]} icon={
            <svg width="60" height="58" viewBox="0 0 60 58" fill="#fff" stroke="#8a8a8a">
              <rect x=".5" y=".5" width="30" height="18" fill="#f3f3f3" />
              <path d="M15.5 0V18" />
              <rect x=".5" y="38.5" width="30" height="19" fill="#f3f3f3" />
              <path d="M15.5 38V58M0 48H31" />
              <rect x="11.5" y="20.5" width="30" height="15" fill="#bdd0e6" />
              <path d="M30 12L58 38M58 12L30 38" stroke="#d9603d" strokeWidth="5" fill="none" />
            </svg>
          } />
          <Big below className="w-[84px]" lines={["Format"]} icon={
            <svg width="54" height="60" viewBox="0 0 54 60" fill="none" stroke="#8a8a8a">
              <path d="M1 0V8M44 0V8" stroke="#4a7ebb" />
              <path d="M4 4H42M8 1L4 4L8 8M38 1L42 4L38 8" stroke="#4a7ebb" strokeWidth="2" />
              <rect x=".5" y="11.5" width="52" height="38" fill="#fff" />
              <path d="M15 12V50M37 12V50M0 21H53M0 41H53" />
              <rect x="15" y="21" width="14" height="28" fill="#4a7ebb" stroke="none" />
              <path d="M1 50V58H15L22 50M24 50V58H38L44 50" />
            </svg>
          } />
        </Group>

        <Group label="Editing" className="w-[388px]">
          <div className="w-[206px] pl-[24px] flex flex-col text-[23px]">
            <div className="flex items-center h-[46px]">
              <span className="w-[36px] text-[38px] leading-[38px] text-[#666] font-['Liberation_Sans'] pl-[1px]">Σ</span>
              <span>AutoSum</span>
              <Caret className="ml-[22px]" />
            </div>
            <div className="flex items-center h-[44px]">
              <svg className="mr-[8px]" width="28" height="29" viewBox="0 0 28 29">
                <rect x=".5" y=".5" width="27" height="28" fill="#fff" stroke="#8a8a8a" />
                <rect x="0" y="0" width="28" height="7" fill="#777" />
                <path d="M14 9V24M7 17L14 24L21 17" fill="none" stroke="#4a7ebb" strokeWidth="3" />
              </svg>
              <span>Fill</span>
              <Caret className="ml-[9px]" />
            </div>
            <div className="flex items-center h-[44px] mt-[3px]">
              <svg className="mr-[9px]" width="27" height="24" viewBox="0 0 27 24">
                <path d="M1 15L15 1C18 0 24 3 25 8L11 23Z" fill="#e88395" />
              </svg>
              <span>Clear</span>
              <Caret className="ml-[9px]" />
            </div>
          </div>
          <Big className="w-[78px] -ml-[2px]" lines={["Sort &", <>Filter<Caret className="ml-[8px]" /></>]} icon={
            <svg className="mt-[2px]" width="58" height="52" viewBox="0 0 58 52">
              <text x="4" y="23" fontSize="30" fill="#4a7ebb" fontFamily="Open Sans">A</text>
              <text x="4" y="52" fontSize="30" fill="#8d5eb7" fontWeight="bold" fontFamily="Open Sans">Z</text>
              <path d="M26 21H58L46 37V52H40V37Z" fill="#7d7d7d" />
            </svg>
          } />
          <Big className="w-[88px] ml-[2px]" lines={["Find &", <>Select<Caret className="ml-[8px]" /></>]} icon={
            <svg width="56" height="54" viewBox="0 0 56 54" fill="none" stroke="#4a7ebb">
              <circle cx="34" cy="21" r="17" strokeWidth="5" fill="#fff" />
              <path d="M21 34L4 51" strokeWidth="6" strokeLinecap="round" />
            </svg>
          } />
        </Group>

        <div className="flex-1 flex items-end justify-center pb-[8px]">
          <svg className="ml-[14px]" width="22" height="12" fill="none" stroke="#555" strokeWidth="1.5"><path d="M1 11L11 1L21 11" /></svg>
        </div>
      </div>

      {/* Formula bar */}
      <div className="flex h-[158px] shrink-0 pt-[18px] pl-[10px] pr-[10px] items-start">
        <div className="w-[202px] h-[44px] bg-white border-2 border-[#d6d6d6] flex items-center justify-between pl-[6px] pr-[10px] text-[26px] text-[#444] font-['Lato']">B54<Caret /></div>
        <div className="ml-[28px] h-[44px] flex flex-col justify-center gap-[4px]">
          <span className="w-[3px] h-[4px] bg-[#a6a6a6]" /><span className="w-[3px] h-[4px] bg-[#a6a6a6]" /><span className="w-[3px] h-[4px] bg-[#a6a6a6]" />
        </div>
        <div className="ml-[28px] w-[218px] h-[44px] bg-white border-2 border-[#d6d6d6] flex items-center">
          <svg className="ml-[24px]" width="24" height="24" stroke="#b5b5b5" strokeWidth="2.4"><path d="M1 2L22 23M22 2L1 23" /></svg>
          <svg className="ml-[48px]" width="26" height="26" fill="none" stroke="#b5b5b5" strokeWidth="3.4"><path d="M2 15L9 24L23 1" /></svg>
          <span className="ml-[44px] text-[33px] italic font-['Liberation_Serif'] text-[#777] leading-none">fx</span>
        </div>
        <div className="ml-[6px] flex-1 h-[119px] bg-white border-2 border-[#d6d6d6] flex justify-end pr-[8px] pt-[12px]">
          <svg width="18" height="10" fill="none" stroke="#666" strokeWidth="2"><path d="M1 9L9 1L17 9" /></svg>
        </div>
      </div>

      {/* Grid + vertical scrollbar */}
      <div className="flex h-[878px] shrink-0">
        <Sheet />
        <div className="flex-1 bg-[#d9d9d9] flex flex-col items-start pl-[2px] pt-[3px]">
          <div className="w-[32px] h-[29px] bg-white border-2 border-[#ababab] flex items-center justify-center">
            <span className="w-0 h-0 border-x-[7px] border-x-transparent border-b-[8px] border-b-[#767676]" />
          </div>
          <div className="w-[32px] h-[292px] bg-white border-2 border-[#ababab] mt-[1px]" />
          <div className="mt-auto mb-[1px] w-[32px] h-[31px] bg-white border-2 border-[#ababab] flex items-center justify-center">
            <span className="w-0 h-0 border-x-[7px] border-x-transparent border-t-[8px] border-t-[#767676]" />
          </div>
        </div>
      </div>

      {/* Sheet tabs + horizontal scrollbar */}
      <div className="flex h-[44px] shrink-0 border-t-2 border-[#a6a6a6] bg-[#e6e6e6]">
        <span className="ml-[33px] mt-[14px] w-0 h-0 border-y-[8px] border-y-transparent border-r-[7px] border-r-[#c8c8c8]" />
        <span className="ml-[36px] mt-[14px] w-0 h-0 border-y-[8px] border-y-transparent border-l-[7px] border-l-[#c8c8c8]" />
        <div className="ml-[62px] w-[112px] h-[40px] -mt-[2px] bg-white border-x border-[#c8c8c8] border-b-[3px] border-b-[#217346] flex items-center justify-center text-[28px] font-bold text-[#217346] font-['Lato']">Sheet1</div>
        <svg className="ml-[47px] mt-[6px]" width="34" height="34" fill="none" stroke="#8a8a8a">
          <circle cx="17" cy="17" r="15.5" strokeWidth="2" />
          <path d="M17 9V25M9 17H25" strokeWidth="3.5" />
        </svg>
        <div className="ml-[1193px] mt-[10px] flex flex-col gap-[4px]">
          <span className="w-[3px] h-[4px] bg-[#a6a6a6]" /><span className="w-[3px] h-[4px] bg-[#a6a6a6]" /><span className="w-[3px] h-[4px] bg-[#a6a6a6]" />
        </div>
        <div className="ml-[20px] mt-[3px] w-[964px] h-[33px] flex bg-[#d9d9d9]">
          <div className="w-[34px] bg-white border-2 border-[#ababab] flex items-center justify-center">
            <span className="w-0 h-0 border-y-[8px] border-y-transparent border-r-[8px] border-r-[#767676]" />
          </div>
          <div className="w-[842px] bg-white border-2 border-l-0 border-[#ababab]" />
          <div className="ml-auto w-[32px] bg-white border-2 border-[#ababab] flex items-center justify-center">
            <span className="w-0 h-0 border-y-[8px] border-y-transparent border-l-[8px] border-l-[#767676]" />
          </div>
        </div>
      </div>

      {/* Status bar */}
      <div className="flex h-[44px] shrink-0 bg-[#f3f3f3] border-t-2 border-[#c8c8c8] border-b-[2px] border-b-[#3c3c3c] text-[#555]">
        <div className="ml-[1966px] w-[80px] bg-[#c4c4c4] flex items-center justify-center">
          <GridIcon w={25} h={25} cols={3} rows={3} stroke="#777" />
        </div>
        <svg className="ml-[27px] mt-[8px]" width="27" height="25" fill="none" stroke="#777">
          <rect x=".5" y=".5" width="26" height="24" />
          <rect x="6.5" y="3.5" width="14" height="18" />
          <path d="M9 8H18M9 11H18M9 14H18M9 17H18" />
        </svg>
        <svg className="ml-[53px] mt-[8px]" width="27" height="25" fill="none" stroke="#777">
          <rect x=".5" y=".5" width="26" height="24" />
          <path d="M1 15H17V1M8.5 1V15" />
        </svg>
        <div className="ml-[38px] mt-[20px] w-[16px] h-[1.5px] bg-[#555]" />
        <div className="relative ml-[12px] w-[198px] h-[2px] mt-[20px] bg-[#aaaaaa]">
          <span className="absolute left-[73px] -top-[10px] w-[10px] h-[22px] bg-[#666]" />
          <span className="absolute left-[98px] -top-[5px] w-[2px] h-[11px] bg-[#aaaaaa]" />
        </div>
        <svg className="ml-[11px] mt-[13px]" width="15" height="15" stroke="#555" strokeWidth="1.5"><path d="M0 7.5H15M7.5 0V15" /></svg>
        <span className="ml-[26px] text-[21px] leading-[38px] tracking-[-0.6px]">80%</span>
      </div>
    </div>
  );
}
